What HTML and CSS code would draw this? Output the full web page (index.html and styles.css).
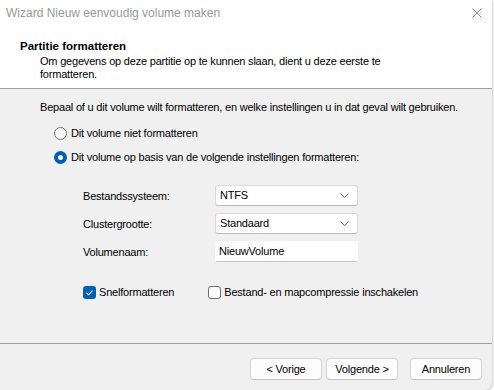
FILE: index.html
```html
<!DOCTYPE html>
<html lang="nl">
<head>
<meta charset="utf-8">
<title>Wizard Nieuw eenvoudig volume maken</title>
<link rel="stylesheet" href="styles.css">
</head>
<body>
<div class="dialog">
  <div class="top">
    <div class="titlebar">
      <span class="title">Wizard Nieuw eenvoudig volume maken</span>
      <svg class="close" width="10" height="10" viewBox="0 0 10 10"><path d="M0.5 0.5L9.5 9.5M9.5 0.5L0.5 9.5" stroke="#8a8a8a" stroke-width="1" fill="none"/></svg>
    </div>
    <div class="header">
      <div class="h-title">Partitie formatteren</div>
      <div class="h-sub">Om gegevens op deze partitie op te kunnen slaan, dient u deze eerste te formatteren.</div>
    </div>
  </div>
  <div class="content">
    <p class="intro">Bepaal of u dit volume wilt formatteren, en welke instellingen u in dat geval wilt gebruiken.</p>
    <div class="radios">
      <label class="radio-row"><span class="radio"></span>Dit volume niet formatteren</label>
      <label class="radio-row"><span class="radio checked"></span>Dit volume op basis van de volgende instellingen formatteren:</label>
    </div>
    <div class="form">
      <span class="lbl">Bestandssysteem:</span>
      <div class="combo"><span>NTFS</span><svg class="chev" width="9" height="5" viewBox="0 0 9 5"><path d="M0.5 0.5L4.5 4.5L8.5 0.5" stroke="#606060" fill="none"/></svg></div>
      <span class="lbl">Clustergrootte:</span>
      <div class="combo"><span>Standaard</span><svg class="chev" width="9" height="5" viewBox="0 0 9 5"><path d="M0.5 0.5L4.5 4.5L8.5 0.5" stroke="#606060" fill="none"/></svg></div>
      <span class="lbl">Volumenaam:</span>
      <div class="textbox">NieuwVolume</div>
    </div>
    <div class="checks">
      <label class="check-row"><span class="check checked"><svg width="13" height="13" viewBox="0 0 13 13"><path d="M3.5 6.8L5.5 8.8L9.6 4.6" stroke="#fff" stroke-width="1.1" fill="none"/></svg></span>Snelformatteren</label>
      <label class="check-row"><span class="check"></span>Bestand- en mapcompressie inschakelen</label>
    </div>
  </div>
  <div class="footer">
    <button class="btn">&lt; Vorige</button>
    <button class="btn">Volgende &gt;</button>
    <button class="btn cancel">Annuleren</button>
  </div>
</div>
</body>
</html>
```
FILE: styles.css
```css
* { box-sizing: border-box; }
html, body { margin: 0; padding: 0; }
body {
  background: #fbfbfb;
  font-family: "Liberation Sans", Arial, sans-serif;
  font-size: 11px;
  letter-spacing: -0.2px;
  line-height: 15px;
  color: #000;
}
.dialog {
  width: 492px;
  height: 390px;
  background: #f0f0f0;
  display: flex;
  flex-direction: column;
  border-bottom-right-radius: 8px;
  box-shadow: 1px 1px 2px rgba(0,0,0,0.18);
  overflow: hidden;
}
.top {
  background: #fff;
  height: 89px;
  border-bottom: 1px solid #a0a0a0;
}
.titlebar {
  height: 27px;
  display: flex;
  align-items: center;
  justify-content: space-between;
  padding: 0 10px 0 6px;
  color: #999;
  font-size: 12px;
  letter-spacing: 0;
}
.close { margin-top: -1px; }
.header { padding: 12px 0 0 20px; }
.h-title { font-weight: bold; font-size: 11.5px; letter-spacing: 0; }
.h-sub {
  padding-left: 20px;
  width: 390px;
  line-height: 13px;
  margin-top: 1px;
}
.content {
  flex: 1;
  padding: 11px 0 0 40px;
}
.intro { margin: 0; }
.radios {
  display: flex;
  flex-direction: column;
  gap: 8px;
  margin-top: 10px;
  padding-left: 14px;
}
.radio-row {
  display: flex;
  align-items: center;
  height: 16px;
  gap: 4px;
}
.radio {
  width: 13px;
  height: 13px;
  border-radius: 50%;
  border: 1px solid #6e6e6e;
  background: #f7f7f7;
  flex: none;
}
.radio.checked {
  border: 4px solid #005fb8;
  background: #fff;
}
.form {
  display: grid;
  grid-template-columns: 132px 143px;
  row-gap: 7px;
  margin-top: 20px;
  padding-left: 43px;
  align-items: center;
}
.lbl { padding-top: 2px; }
.combo, .textbox {
  height: 21px;
  background: #fff;
  border: 1px solid #d9d9d9;
  border-bottom-color: #b8b8b8;
  border-radius: 3px;
  display: flex;
  align-items: center;
  padding: 0 6px 0 4px;
}
.combo { justify-content: space-between; }
.textbox {
  border-color: #fff;
  border-bottom-color: #c8c8c8;
  border-radius: 2px;
  padding-left: 3px;
}
.chev { margin-right: 2px; }
.checks {
  display: flex;
  gap: 34px;
  margin-top: 23px;
  padding-left: 43px;
}
.check-row {
  display: flex;
  align-items: center;
  gap: 3px;
  height: 15px;
}
.check {
  width: 13px;
  height: 13px;
  border-radius: 3px;
  border: 1px solid #6e6e6e;
  background: #f9f9f9;
  flex: none;
  display: flex;
}
.check.checked {
  border: none;
  background: #005fb8;
}
.footer {
  height: 47px;
  border-top: 1px solid #a0a0a0;
  display: flex;
  justify-content: flex-end;
  align-items: flex-start;
  padding: 14px 10px 0 0;
}
.btn {
  width: 72px;
  height: 22px;
  margin: 0 0 0 4px;
  padding: 0;
  background: #fdfdfd;
  border: 1px solid #d4d4d4;
  border-bottom-color: #c2c2c2;
  border-radius: 4px;
  font-family: "Liberation Sans", Arial, sans-serif;
  font-size: 11px;
  letter-spacing: -0.2px;
  color: #000;
}
.btn.cancel { margin-left: 12px; }
```
